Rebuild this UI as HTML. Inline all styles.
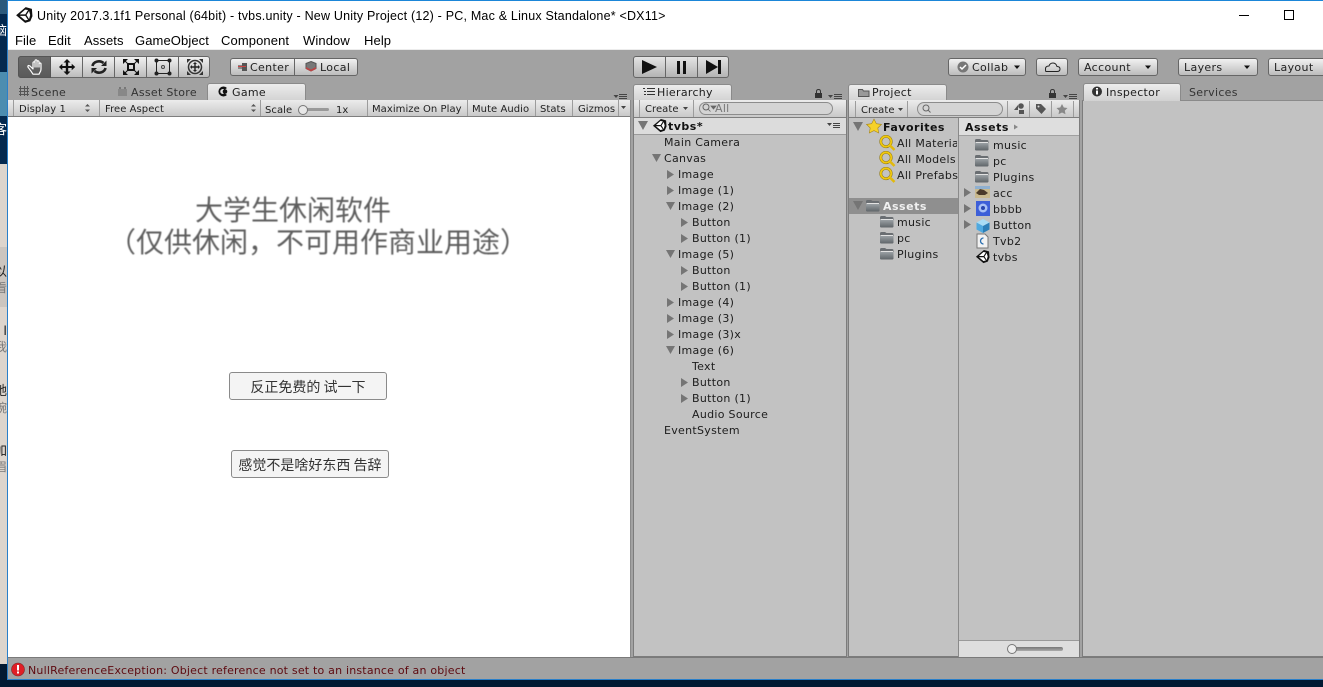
<!DOCTYPE html>
<html><head><meta charset="utf-8"><title>Unity</title>
<style>
html,body{margin:0;padding:0;width:1323px;height:687px;overflow:hidden;background:#021a33}
div{position:absolute;box-sizing:border-box}
.t{position:absolute;white-space:nowrap;font-family:"DejaVu Sans",sans-serif;font-size:11px;line-height:16px;color:#1c1c1c;letter-spacing:.3px;margin-top:1px}
.b{font-weight:bold;letter-spacing:.5px}
.s{font-size:10px;letter-spacing:.05px;color:#222}
.k{font-size:11px;letter-spacing:.35px;color:#222}
.m{font-family:"Liberation Sans",sans-serif;font-size:13px;color:#000;letter-spacing:.1px}
.btn{background:linear-gradient(#f1f1f1,#bcbcbc);border:1px solid #666;border-radius:3px}
.tab{background:linear-gradient(#ececec,#d2d2d2);border:1px solid #8a8a8a;border-bottom:0;border-radius:3px 3px 0 0}
.bar{background:linear-gradient(#ececec,#c9c9c9);border-bottom:1px solid #7e7e7e}
.sep{width:1px;background:#9c9c9c}
.cjk{position:absolute;white-space:nowrap;font-family:"Noto Sans CJK SC",sans-serif}
.pb{background:#f4f4f4;border:1px solid #8a8a8a;border-radius:3px;color:#333;font-family:"Noto Sans CJK SC",sans-serif;font-size:14px;text-align:center;line-height:28px;white-space:nowrap}
.side{position:absolute;right:0;white-space:nowrap;font-family:"Noto Sans CJK SC",sans-serif;font-size:13px;line-height:16px}
</style></head>
<body>
<!-- desktop strip -->
<div style="left:0;top:0;width:8px;height:687px;background:#021a33;overflow:hidden">
<div style="left:0;top:0;width:7px;height:14px;background:#2c5a7c"></div>
<div style="left:0;top:14px;width:7px;height:150px;background:#04294f"></div>
<div style="left:0;top:72px;width:7px;height:44px;background:#4c8db0"></div>
<div style="left:0;top:164px;width:7px;height:500px;background:#ddd5cd"></div>
<div style="left:0;top:247px;width:7px;height:60px;background:#cbc5bf"></div>
<div style="left:0;top:664px;width:7px;height:23px;background:#021a33"></div>
<div style="left:0;top:0;width:7px;height:687px;overflow:hidden">
<span class="side" style="top:22px;color:#fff">脑</span>
<span class="side" style="top:121px;color:#fff">客</span>
<span class="side" style="top:263px;color:#222">以</span>
<span class="side" style="top:280px;color:#777;font-size:12px">看</span>
<span class="side" style="top:322px;color:#222">I</span>
<span class="side" style="top:339px;color:#777;font-size:12px">我</span>
<span class="side" style="top:382px;color:#222">她</span>
<span class="side" style="top:400px;color:#777;font-size:12px">碗</span>
<span class="side" style="top:442px;color:#222">加</span>
<span class="side" style="top:459px;color:#777;font-size:12px">眉</span>
</div>
<div style="left:7px;top:0;width:1px;height:680px;background:#2a7fc9"></div>
</div>
<!-- window -->
<div style="left:8px;top:0;width:1315px;height:1px;background:#1b86d8"></div>
<div style="left:8px;top:1px;width:1315px;height:49px;background:#fff"></div>
<div style="left:8px;top:49px;width:1315px;height:1px;background:#ececec"></div>
<div style="left:8px;top:50px;width:1315px;height:629px;background:#a2a2a2"></div>
<div style="left:7px;top:679px;width:1316px;height:1px;background:#2a7fc9"></div>

<span class="t m" style="left:37px;top:7px;font-size:12.5px;letter-spacing:.2px">Unity 2017.3.1f1 Personal (64bit) - tvbs.unity - New Unity Project (12) - PC, Mac &amp; Linux Standalone* &lt;DX11&gt;</span>
<span class="t m" style="left:15px;top:32px">File</span>
<span class="t m" style="left:48px;top:32px">Edit</span>
<span class="t m" style="left:84px;top:32px">Assets</span>
<span class="t m" style="left:135px;top:32px">GameObject</span>
<span class="t m" style="left:221px;top:32px">Component</span>
<span class="t m" style="left:303px;top:32px">Window</span>
<span class="t m" style="left:364px;top:32px">Help</span>

<!-- toolbar -->
<div class="btn" style="left:18px;top:56px;width:192px;height:22px"></div>
<div style="left:18px;top:56px;width:33px;height:22px;background:linear-gradient(#6a6a6a,#5a5a5a);border:1px solid #555;border-radius:3px 0 0 3px"></div>
<div class="sep" style="left:82px;top:57px;height:20px;background:#666"></div>
<div class="sep" style="left:114px;top:57px;height:20px;background:#666"></div>
<div class="sep" style="left:146px;top:57px;height:20px;background:#666"></div>
<div class="sep" style="left:178px;top:57px;height:20px;background:#666"></div>
<div class="btn" style="left:230px;top:58px;width:128px;height:18px"></div>
<div class="sep" style="left:294px;top:59px;height:16px;background:#666"></div>
<span class="t k" style="left:250px;top:59px">Center</span>
<span class="t k" style="left:320px;top:59px">Local</span>
<div class="btn" style="left:633px;top:56px;width:96px;height:22px;background:linear-gradient(#e4e4e4,#b4b4b4)"></div>
<div class="sep" style="left:665px;top:57px;height:20px;background:#666"></div>
<div class="sep" style="left:697px;top:57px;height:20px;background:#666"></div>
<div class="btn" style="left:948px;top:58px;width:78px;height:18px"></div>
<span class="t k" style="left:972px;top:59px">Collab</span>
<div class="btn" style="left:1036px;top:58px;width:32px;height:18px"></div>
<div class="btn" style="left:1078px;top:58px;width:80px;height:18px"></div>
<span class="t k" style="left:1084px;top:59px">Account</span>
<div class="btn" style="left:1178px;top:58px;width:80px;height:18px"></div>
<span class="t k" style="left:1184px;top:59px">Layers</span>
<div class="btn" style="left:1268px;top:58px;width:70px;height:18px"></div>
<span class="t k" style="left:1274px;top:59px">Layout</span>

<!-- game panel -->
<span class="t" style="left:31px;top:84px;color:#333">Scene</span>
<span class="t" style="left:131px;top:84px;color:#333">Asset Store</span>
<div class="tab" style="left:207px;top:83px;width:99px;height:18px"></div>
<span class="t" style="left:232px;top:84px">Game</span>
<div class="bar" style="left:8px;top:100px;width:623px;height:17px"></div>
<div class="sep" style="left:13px;top:100px;height:16px"></div>
<div class="sep" style="left:99px;top:100px;height:16px"></div>
<div class="sep" style="left:260px;top:100px;height:16px"></div>
<div class="sep" style="left:367px;top:100px;height:16px"></div>
<div class="sep" style="left:467px;top:100px;height:16px"></div>
<div class="sep" style="left:535px;top:100px;height:16px"></div>
<div class="sep" style="left:572px;top:100px;height:16px"></div>
<div class="sep" style="left:618px;top:100px;height:16px"></div>
<span class="t s" style="left:19px;top:101px">Display 1</span>
<span class="t s" style="left:105px;top:101px">Free Aspect</span>
<span class="t s" style="left:265px;top:102px">Scale</span>
<span class="t s" style="left:336px;top:102px">1x</span>
<span class="t s" style="left:372px;top:101px">Maximize On Play</span>
<span class="t s" style="left:472px;top:101px">Mute Audio</span>
<span class="t s" style="left:540px;top:101px">Stats</span>
<span class="t s" style="left:578px;top:101px">Gizmos</span>
<div style="left:8px;top:117px;width:623px;height:540px;background:#fff"></div>
<div style="left:630px;top:100px;width:1px;height:557px;background:#8a8a8a"></div>
<span class="cjk" style="left:195px;top:190px;font-size:28px;line-height:38px;color:#5e5e5e;filter:blur(.5px)">大学生休闲软件</span>
<span class="cjk" style="left:108px;top:222px;font-size:28px;line-height:38px;color:#5e5e5e;filter:blur(.5px)">&#xFF08;仅供休闲&#xFF0C;不可用作商业用途&#xFF09;</span>
<div class="pb" style="left:229px;top:372px;width:158px;height:28px">反正免费的 试一下</div>
<div class="pb" style="left:231px;top:450px;width:158px;height:28px">感觉不是啥好东西 告辞</div>

<!-- hierarchy -->
<div class="tab" style="left:633px;top:84px;width:99px;height:17px"></div>
<span class="t" style="left:657px;top:84px">Hierarchy</span>
<div style="left:633px;top:100px;width:214px;height:557px;background:#c2c2c2;border:1px solid #7c7c7c;border-top:0"></div>
<div class="bar" style="left:634px;top:100px;width:212px;height:18px"></div>
<div class="sep" style="left:639px;top:100px;height:17px"></div>
<div class="sep" style="left:693px;top:100px;height:17px"></div>
<span class="t s" style="left:645px;top:101px">Create</span>
<div style="left:699px;top:102px;width:134px;height:13px;border:1px solid #8c8c8c;border-radius:7px;background:#d4d4d4"></div>
<span class="t" style="left:715px;top:100px;color:#777">All</span>
<div style="left:634px;top:118px;width:212px;height:17px;background:#dcdcdc;border-bottom:1px solid #9a9a9a"></div>
<span class="t b" style="left:668px;top:118px;color:#111">tvbs*</span>
<span class="t" style="left:664px;top:134px">Main Camera</span>
<span class="t" style="left:664px;top:150px">Canvas</span>
<span class="t" style="left:678px;top:166px">Image</span>
<span class="t" style="left:678px;top:182px">Image (1)</span>
<span class="t" style="left:678px;top:198px">Image (2)</span>
<span class="t" style="left:692px;top:214px">Button</span>
<span class="t" style="left:692px;top:230px">Button (1)</span>
<span class="t" style="left:678px;top:246px">Image (5)</span>
<span class="t" style="left:692px;top:262px">Button</span>
<span class="t" style="left:692px;top:278px">Button (1)</span>
<span class="t" style="left:678px;top:294px">Image (4)</span>
<span class="t" style="left:678px;top:310px">Image (3)</span>
<span class="t" style="left:678px;top:326px">Image (3)x</span>
<span class="t" style="left:678px;top:342px">Image (6)</span>
<span class="t" style="left:692px;top:358px">Text</span>
<span class="t" style="left:692px;top:374px">Button</span>
<span class="t" style="left:692px;top:390px">Button (1)</span>
<span class="t" style="left:692px;top:406px">Audio Source</span>
<span class="t" style="left:664px;top:422px">EventSystem</span>

<!-- project -->
<div class="tab" style="left:848px;top:84px;width:99px;height:17px"></div>
<span class="t" style="left:872px;top:84px">Project</span>
<div style="left:848px;top:100px;width:232px;height:557px;background:#c2c2c2;border:1px solid #7c7c7c;border-top:0"></div>
<div class="bar" style="left:849px;top:100px;width:230px;height:18px"></div>
<div class="sep" style="left:855px;top:101px;height:16px"></div>
<div class="sep" style="left:907px;top:101px;height:16px"></div>
<div class="sep" style="left:1007px;top:101px;height:16px"></div>
<div class="sep" style="left:1029px;top:101px;height:16px"></div>
<div class="sep" style="left:1051px;top:101px;height:16px"></div>
<div class="sep" style="left:1073px;top:101px;height:16px"></div>
<span class="t s" style="left:861px;top:102px">Create</span>
<div style="left:917px;top:102px;width:86px;height:14px;border:1px solid #8c8c8c;border-radius:7px;background:#d4d4d4"></div>
<div style="left:958px;top:118px;width:1px;height:539px;background:#8a8a8a"></div>
<div style="left:959px;top:118px;width:120px;height:18px;background:#dedede;border-bottom:1px solid #a0a0a0"></div>
<div style="left:849px;top:198px;width:109px;height:16px;background:#8f8f8f"></div>
<span class="t b" style="left:883px;top:119px;color:#111">Favorites</span>
<span class="t" style="left:897px;top:135px;width:60px;overflow:hidden">All Materials</span>
<span class="t" style="left:897px;top:151px">All Models</span>
<span class="t" style="left:897px;top:167px;width:61px;overflow:hidden">All Prefabs</span>
<span class="t b" style="left:883px;top:198px;color:#f0f0f0">Assets</span>
<span class="t" style="left:897px;top:214px">music</span>
<span class="t" style="left:897px;top:230px">pc</span>
<span class="t" style="left:897px;top:246px">Plugins</span>
<span class="t b" style="left:965px;top:119px;color:#111">Assets</span>
<span class="t" style="left:993px;top:137px">music</span>
<span class="t" style="left:993px;top:153px">pc</span>
<span class="t" style="left:993px;top:169px">Plugins</span>
<span class="t" style="left:993px;top:185px">acc</span>
<span class="t" style="left:993px;top:201px">bbbb</span>
<span class="t" style="left:993px;top:217px">Button</span>
<span class="t" style="left:993px;top:233px">Tvb2</span>
<span class="t" style="left:993px;top:249px">tvbs</span>
<div style="left:959px;top:640px;width:120px;height:17px;background:#dedede;border-top:1px solid #9a9a9a"></div>
<div style="left:1012px;top:647px;width:51px;height:4px;border-radius:2px;background:linear-gradient(#777,#aaa)"></div>
<div style="left:1007px;top:644px;width:10px;height:10px;border-radius:5px;border:1px solid #777;background:#eee"></div>

<!-- inspector -->
<div style="left:1082px;top:100px;width:241px;height:557px;background:#c2c2c2;border:1px solid #7c7c7c;border-top:1px solid #8a8a8a;border-right:0"></div>
<div class="tab" style="left:1083px;top:83px;width:98px;height:18px"></div>
<span class="t" style="left:1106px;top:84px">Inspector</span>
<span class="t" style="left:1189px;top:84px;color:#333">Services</span>

<!-- status -->
<div style="left:8px;top:657px;width:1315px;height:1px;background:#7a7a7a"></div>
<span class="t" style="left:28px;top:662px;color:#5e0a10;letter-spacing:.2px">NullReferenceException: Object reference not set to an instance of an object</span>

<!-- icons -->
<svg width="1323" height="687" viewBox="0 0 1323 687" style="position:absolute;left:0;top:0" xmlns="http://www.w3.org/2000/svg">
<defs>
<linearGradient id="fg" x1="0" y1="0" x2="0" y2="1"><stop offset="0" stop-color="#9aa0a4"/><stop offset="1" stop-color="#5f6569"/></linearGradient>
<symbol id="u" viewBox="0 0 16 16" overflow="visible"><path d="M9.500 1L15 2.500 15.500 9 13.600 13.500 9 15 1 8.200 9.500 1Z" fill="#111"/><path d="M9 3.200L4.200 7.400h5L11.600 3.600ZM4.200 8.800L9 12.800 11.600 12.300 9.200 8.800ZM10.200 8l2.300 3.700L13.500 8 12.500 4.400Z" fill="#fff"/></symbol>
<symbol id="f" viewBox="0 0 15 13"><path d="M1 2.500Q1 1 2.500 1H6L7.500 2H13Q14.500 2 14.500 3.500V11Q14.500 12.500 13 12.500H2.500Q1 12.500 1 11Z" fill="#6a6e72"/><path d="M1 5H14.500V11Q14.500 12.500 13 12.500H2.500Q1 12.500 1 11Z" fill="url(#fg)"/><path d="M1.500 4.500H14" stroke="#e2e2e2" stroke-width="1"/></symbol>
<symbol id="g" viewBox="0 0 16 16"><circle cx="6.500" cy="6.500" r="5.200" fill="none" stroke="#8a7418" stroke-width="2.800"/><circle cx="6.500" cy="6.500" r="5.200" fill="none" stroke="#f0c80e" stroke-width="1.800"/><path d="M10.500 10.500l4.500 4.500" stroke="#e2b90c" stroke-width="2.600"/></symbol>
</defs>
<!-- title logo -->
<use href="#u" x="15" y="6" width="18" height="18"/>
<!-- window controls -->
<rect x="1239" y="15" width="10" height="1" fill="#000"/>
<rect x="1284.500" y="10.500" width="9" height="9" fill="none" stroke="#000"/>
<!-- tools -->
<g fill="none" stroke="#fff" stroke-width="1.200" stroke-linecap="round" stroke-linejoin="round"><path d="M30 66l3 3v-6q0-1.200 1-1.200t1 1.200v-2q0-1.200 1-1.200t1 1.200v1q0-1.200 1-1.200t1 1.200v2q0-1 1-1t1 1v5q0 2-1 3.200l-1 2h-6l-2-3-3-4q-.5-1.500.8-1.700z"/><path d="M35 63v4M37 62v5M39 63v4"/></g>
<path d="M67 59l3.500 3.500h-2.300V66h3.500v-2.300L75.200 67l-3.500 3.300V68h-3.500v3.500h2.300L67 75l-3.500-3.500h2.300V68h-3.500v2.300L59 67l3.300-3.300V66h3.500v-3.500h-2.300z" fill="#111"/>
<path d="M92.500 66a6.500 5.500 0 0 1 11-3M105.500 68a6.500 5.500 0 0 1-11 3" fill="none" stroke="#222" stroke-width="2.600"/><path d="M101 66l5.500-5.500V66zM97 68l-5.500 5.500V68z" fill="#222"/>
<rect x="128" y="64" width="6" height="6" fill="none" stroke="#111" stroke-width="2"/>
<path d="M123 59h5l-5 5zM139 59v5l-5-5zM123 75v-5l5 5zM139 75h-5l5-5z" fill="#111"/><path d="M125 61l3 3M137 61l-3 3M125 73l3-3M137 73l-3-3" stroke="#111"/>
<rect x="156.500" y="60.500" width="13" height="13" fill="none" stroke="#222"/><circle cx="163" cy="67" r="1.500" fill="none" stroke="#444"/><circle cx="156.500" cy="60.500" r="2" fill="#222"/><circle cx="169.500" cy="60.500" r="2" fill="#222"/><circle cx="156.500" cy="73.500" r="2" fill="#222"/><circle cx="169.500" cy="73.500" r="2" fill="#222"/>
<circle cx="195" cy="67" r="6.500" fill="none" stroke="#333" stroke-width="1.500"/><path d="M195 62l2 2h-1.300v2.300H198v-1.300l2 2-2 2v-1.300h-2.300V70H197l-2 2-2-2h1.300v-2.300H192V69l-2-2 2-2v1.300h2.300V64H193z" fill="#222"/><path d="M187 59h4l-4 4zM203 59v4l-4-4zM187 75v-4l4 4zM203 75h-4l4-4z" fill="#333"/>
<!-- center/local icons -->
<path d="M238 65h4v4h-4z" fill="#888"/><path d="M242 63h5v8h-5z" fill="#555"/><path d="M238 66.500h8" stroke="#c44" stroke-width="1"/>
<path d="M311 61.500l5 2v5l-5 2.500-5-2.500v-5z" fill="#777" stroke="#555"/><path d="M306 67l5 2.500 5-2.500v2l-5 2.500-5-2.500z" fill="#b44"/>
<!-- play -->
<path d="M642 60v14l15-7z" fill="#111"/>
<rect x="677" y="61" width="3" height="13" fill="#111"/><rect x="683" y="61" width="3" height="13" fill="#111"/>
<path d="M706 60v14l12-7z" fill="#111"/><rect x="718" y="60" width="3" height="14" fill="#111"/>
<!-- collab -->
<circle cx="963" cy="67" r="5.500" fill="#777"/><path d="M960 67l2 2 4-4" stroke="#fff" stroke-width="1.500" fill="none"/>
<path d="M1014 65.500h6l-3 3.500zM1145 65.500h6l-3 3.500zM1244 65.500h6l-3 3.500z" fill="#111"/>
<path d="M1046 71.500h11q3 0 3-2.500t-3-2.500q-1-3.500-4-3.500t-4 3q-3.500 0-3.500 2.800t.5 2.700z" fill="none" stroke="#222"/>
<!-- tab icons -->
<path d="M19 88.500h10M19 91.500h10M19 94.500h10M20.500 86v10M24.500 86v10M27.500 86v10" stroke="#555" fill="none"/>
<path d="M118 89h9v7h-9z" fill="#888"/><path d="M119 87h2v2h-2zM124 87h2v2h-2z" fill="#777"/>
<path d="M227 88a5 5 0 1 0 0 7l-2.500-1.700a2.500 2.500 0 1 1 0-3.600z" fill="#111"/><circle cx="225" cy="91.500" r="2.300" fill="#111"/>
<path d="M643 88.500h2M647 88.500h8M647 91.500h8M647 94.500h8M644 91.500h2M644 94.500h2" stroke="#333" fill="none"/>
<path d="M858.500 89.500h4l1 1.500h5.500v5.500h-10.500z" fill="#999" stroke="#555"/>
<circle cx="1097" cy="91.500" r="5" fill="#333"/><rect x="1096" y="90.500" width="2" height="4" fill="#fff"/><rect x="1096" y="88" width="2" height="1.500" fill="#fff"/>
<!-- menus + locks -->
<g fill="#444"><path d="M613.500 95h5l-2.500 3z"/><rect x="619" y="94" width="8" height="1"/><rect x="619" y="96" width="8" height="1"/><rect x="619" y="98" width="8" height="1"/></g>
<g fill="#444"><path d="M828 95h5l-2.500 3z"/><rect x="834" y="94" width="8" height="1"/><rect x="834" y="96" width="8" height="1"/><rect x="834" y="98" width="8" height="1"/></g>
<g fill="#444"><path d="M1063 95h5l-2.500 3z"/><rect x="1069" y="94" width="8" height="1"/><rect x="1069" y="96" width="8" height="1"/><rect x="1069" y="98" width="8" height="1"/></g>
<g fill="#444"><path d="M827 123h5l-2.500 3z"/><rect x="833" y="123" width="7" height="1"/><rect x="833" y="125" width="7" height="1"/><rect x="833" y="127" width="7" height="1"/></g>
<rect x="815" y="93" width="7" height="5" fill="#333"/><path d="M816.500 93v-1.500q0-2 2-2t2 2v1.500" fill="none" stroke="#333"/>
<rect x="1049" y="93" width="7" height="5" fill="#333"/><path d="M1050.500 93v-1.500q0-2 2-2t2 2v1.500" fill="none" stroke="#333"/>
<!-- game toolbar arrows -->
<path d="M85 106.500l2.500-2.500 2.500 2.500zM85 109.500l2.500 2.500 2.500-2.500zM251 106.500l2.500-2.500 2.500 2.500zM251 109.500l2.500 2.500 2.500-2.500z" fill="#555"/>
<path d="M621 106h5l-2.500 3zM683 107h5l-2.500 3zM898 108h5l-2.500 3z" fill="#444"/>
<!-- scale slider -->
<rect x="303" y="108" width="26" height="3" rx="1.500" fill="#999"/><circle cx="303" cy="110" r="4.500" fill="#e8e8e8" stroke="#777"/>
<!-- search icons -->
<circle cx="706" cy="107" r="3" fill="none" stroke="#666"/><path d="M708 109l2.500 2.500M711 106h5l-2.500 3z" stroke="#666" fill="#666" stroke-width=".8"/>
<circle cx="926" cy="108" r="3" fill="none" stroke="#666"/><path d="M928 110l2.500 2.500" stroke="#666"/>
<!-- project toolbar icons -->
<path d="M1018 105l-4 5h4z" fill="#555"/><circle cx="1021" cy="106" r="2.800" fill="#555"/><rect x="1019" y="110" width="5" height="4" fill="#555"/>
<path d="M1036 104h5l5 5-4.500 5-5.500-5.500z" fill="#555"/><circle cx="1038.500" cy="106.500" r="1" fill="#ddd"/>
<path d="M1062 104l1.800 3.500 3.700.5-2.700 2.600.7 3.700-3.500-1.800-3.500 1.800.7-3.700-2.700-2.600 3.700-.5z" fill="#888"/>
<!-- tree arrows: down -->
<g fill="#757575">
<path d="M638 121h10l-5 9zM652 154h9l-4.500 8zM666 202h9l-4.500 8zM666 250h9l-4.500 8zM666 346h9l-4.500 8zM853 122h10l-5 9zM853 201h10l-5 9z"/>
<!-- right -->
<path d="M667 170v9l7-4.500zM667 186v9l7-4.500zM681 218v9l7-4.500zM681 234v9l7-4.500zM681 266v9l7-4.500zM681 282v9l7-4.500zM667 298v9l7-4.500zM667 314v9l7-4.500zM667 330v9l7-4.500zM681 378v9l7-4.500zM681 394v9l7-4.500zM964 188v9l7-4.500zM964 204v9l7-4.500zM964 220v9l7-4.500z"/>
<path d="M1014 124.500v5l4-2.500z" fill="#888"/>
</g>
<use href="#u" x="652" y="118" width="15" height="15"/>
<path d="M874 119l2.400 4.700 5.100.7-3.700 3.600.9 5-4.700-2.400-4.700 2.400.9-5-3.700-3.600 5.100-.7z" fill="#f6d22a" stroke="#a8871a" stroke-width=".6"/>
<use href="#g" x="879" y="135" width="17" height="16"/>
<use href="#g" x="879" y="151" width="17" height="16"/>
<use href="#g" x="879" y="167" width="17" height="16"/>
<use href="#f" x="865" y="199" width="15" height="13"/>
<use href="#f" x="879" y="215" width="15" height="13"/>
<use href="#f" x="879" y="231" width="15" height="13"/>
<use href="#f" x="879" y="247" width="15" height="13"/>
<use href="#f" x="974" y="138" width="15" height="13"/>
<use href="#f" x="974" y="154" width="15" height="13"/>
<use href="#f" x="974" y="170" width="15" height="13"/>
<rect x="975" y="186" width="15" height="12" fill="#c9b98e"/><path d="M976 193l4-4 4 1 4 3-3 2h-6z" fill="#4a3a2a"/><rect x="975" y="186" width="15" height="3" fill="#8fb0d0"/>
<rect x="976" y="201" width="14" height="15" fill="#3d5fd8"/><circle cx="983" cy="208" r="4.500" fill="#a8c0f5"/><circle cx="983" cy="208" r="2" fill="#2846b0"/>
<path d="M976.500 222.500l6.500-3.500 6.500 3.500-6.500 3.500z" fill="#a8dcf5"/><path d="M983 233l6.500-3.500v-7l-6.500 3.500z" fill="#2c7fb8"/><path d="M983 233l-6.500-3.500v-7l6.500 3.500z" fill="#4fa9e0"/>
<path d="M977 234h8l3 3v11h-11z" fill="#f2f2f2" stroke="#777"/><path d="M983.500 238a3 3 0 1 0 0 6" fill="none" stroke="#2a6fb0" stroke-width="1.300"/>
<use href="#u" x="975" y="249" width="15" height="15"/>
<!-- error -->
<circle cx="18" cy="669.500" r="6.500" fill="#e01e26" stroke="#7a2a2a" stroke-width=".6"/><rect x="17" y="665" width="2" height="5.500" fill="#fff"/><rect x="17" y="671.500" width="2" height="2" fill="#fff"/>
</svg>
</body></html>
